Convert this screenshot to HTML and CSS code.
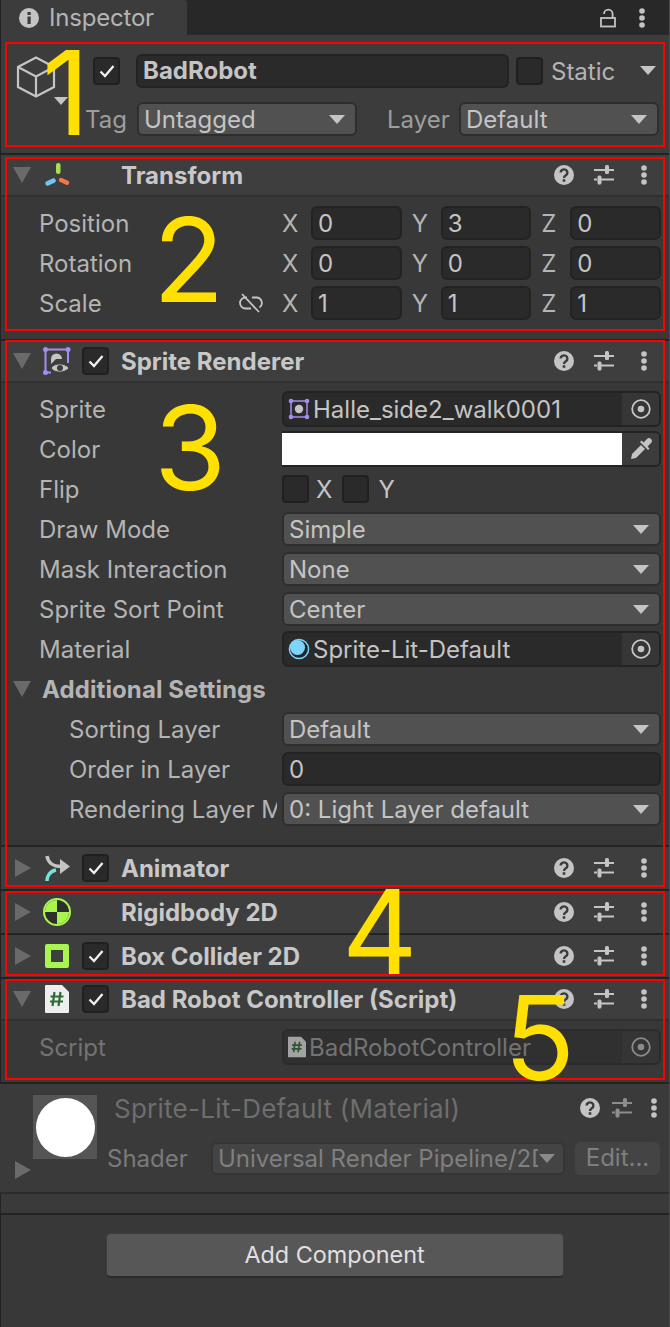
FILE: index.html
```html
<!DOCTYPE html>
<html lang="en">
<head>
    <meta charset="UTF-8">
    <meta name="viewport" content="width=device-width, initial-scale=1.0">
    <title>Inspector</title>
    <link rel="stylesheet" href="styles.css">
</head>
<body>
<svg class="defs" width="0" height="0">
    <symbol id="i-help" viewBox="0 0 20 20">
        <circle cx="10" cy="10" r="10" fill="#c4c4c4"/>
        <path d="M6.600 7.600a3.400 3.200 0 1 1 5.200 2.700c-1.200.8-1.800 1.200-1.800 2.600" fill="none" stroke="#3c3c3c" stroke-width="2.400"/>
        <rect x="8.700" y="14.200" width="2.600" height="2.600" fill="#3c3c3c"/>
    </symbol>
    <symbol id="i-sliders" viewBox="0 0 20 20">
        <path d="M0 5h11M15 5h5M0 14.500h3M7 14.500h13" stroke="#c4c4c4" stroke-width="2" fill="none"/>
        <rect x="11" y="0" width="4" height="9" rx="1.500" fill="#c4c4c4"/>
        <rect x="3.500" y="10.500" width="4" height="9" rx="1.500" fill="#c4c4c4"/>
    </symbol>
    <symbol id="i-dots" viewBox="0 0 8 20">
        <circle cx="4" cy="3" r="2.800" fill="#c4c4c4"/>
        <circle cx="4" cy="10" r="2.800" fill="#c4c4c4"/>
        <circle cx="4" cy="17" r="2.800" fill="#c4c4c4"/>
    </symbol>
    <symbol id="i-check" viewBox="0 0 16 14">
        <path d="M1.500 7.500l4.500 4.500 8.500-10" fill="none" stroke="#f0f0f0" stroke-width="2.300"/>
    </symbol>
    <symbol id="i-target" viewBox="0 0 20 20">
        <circle cx="10" cy="10" r="8.800" fill="none" stroke="#c4c4c4" stroke-width="1.800"/>
        <circle cx="10" cy="10" r="3.300" fill="#c4c4c4"/>
    </symbol>
    <symbol id="i-sprite" viewBox="0 0 22 22">
        <rect x="3" y="3" width="16" height="16" fill="none" stroke="#a48df0" stroke-width="1.500"/>
        <circle cx="11" cy="11" r="4.200" fill="#c4c4c4"/>
        <circle cx="3" cy="3" r="2.300" fill="#a48df0"/>
        <circle cx="19" cy="3" r="2.300" fill="#a48df0"/>
        <circle cx="3" cy="19" r="2.300" fill="#a48df0"/>
        <circle cx="19" cy="19" r="2.300" fill="#a48df0"/>
    </symbol>
    <symbol id="i-script" viewBox="0 0 24 28">
        <path d="M1 0h16l7 7v20a1 1 0 0 1-1 1H1a1 1 0 0 1-1-1V1a1 1 0 0 1 1-1z" fill="#eeeeee"/>
        <path d="M9.500 7l-2 14M15.500 7l-2 14M5.500 11.500h13M5 16.500h13" stroke="#2d6b33" stroke-width="2.200" fill="none"/>
    </symbol>
</svg>

<div class="inspector">
    <div class="tabbar">
        <div class="tab">
            <svg class="tab-icon" width="20" height="20" viewBox="0 0 20 20">
                <circle cx="10" cy="10" r="10" fill="#c4c4c4"/>
                <rect x="8.500" y="8.500" width="3.200" height="7.500" fill="#3c3c3c"/>
                <rect x="8.500" y="4" width="3.200" height="3" fill="#3c3c3c"/>
            </svg>
            <span class="tab-title">Inspector</span>
        </div>
        <div class="tab-tools">
            <svg width="16" height="20" viewBox="0 0 16 20">
                <rect x="1" y="10" width="14" height="8.500" fill="none" stroke="#c4c4c4" stroke-width="1.800"/>
                <path d="M4 6a4.200 4.200 0 0 1 8.600 0v4" fill="none" stroke="#c4c4c4" stroke-width="1.800"/>
            </svg>
            <svg class="dots"><use href="#i-dots"/></svg>
        </div>
    </div>

    <!-- game object header -->
    <section class="object-head">
        <div class="object-icon">
            <svg width="40" height="42" viewBox="0 0 40 42">
                <path d="M20 1.500L38 11v20L20 40.500 2 31V11zM2 11l18 9.500L38 11M20 20.500v20" fill="none" stroke="#c4c4c4" stroke-width="2.200"/>
            </svg>
            <span class="caret caret-small"></span>
        </div>
        <div class="object-fields">
            <div class="object-row">
                <span class="check"><svg class="tick"><use href="#i-check"/></svg></span>
                <div class="field name-field">BadRobot</div>
                <span class="check"></span>
                <span class="static-label">Static</span>
                <span class="caret static-caret"></span>
            </div>
            <div class="object-row tag-row">
                <span class="tag-label">Tag</span>
                <div class="popup tag-popup">Untagged<span class="caret"></span></div>
                <span class="layer-label">Layer</span>
                <div class="popup layer-popup">Default<span class="caret"></span></div>
            </div>
        </div>
    </section>

    <!-- transform -->
    <section class="component">
        <header class="comp-head">
            <span class="fold fold-open"></span>
            <svg class="comp-icon" width="26" height="26" viewBox="0 0 26 26">
                <rect x="11" y="1" width="4.500" height="11" rx="2.200" fill="#a6e34a"/>
                <rect x="15" y="15" width="11" height="4.500" rx="2.200" transform="rotate(25 15 15)" fill="#f0774a"/>
                <rect x="0" y="18" width="11" height="4.500" rx="2.200" transform="rotate(-25 5 20)" fill="#6fc6f5"/>
            </svg>
            <span class="check check-none"></span>
            <span class="comp-title">Transform</span>
            <div class="comp-tools">
                <svg class="help"><use href="#i-help"/></svg>
                <svg class="sliders"><use href="#i-sliders"/></svg>
                <svg class="dots"><use href="#i-dots"/></svg>
            </div>
        </header>
        <div class="comp-body transform-body">
            <div class="row">
                <span class="label">Position</span>
                <div class="xyz">
                    <div class="axis"><span>X</span><div class="field">0</div></div>
                    <div class="axis"><span>Y</span><div class="field">3</div></div>
                    <div class="axis"><span>Z</span><div class="field">0</div></div>
                </div>
            </div>
            <div class="row">
                <span class="label">Rotation</span>
                <div class="xyz">
                    <div class="axis"><span>X</span><div class="field">0</div></div>
                    <div class="axis"><span>Y</span><div class="field">0</div></div>
                    <div class="axis"><span>Z</span><div class="field">0</div></div>
                </div>
            </div>
            <div class="row">
                <span class="label">Scale</span>
                <svg class="link" width="24" height="20" viewBox="0 0 24 20">
                    <path d="M8 4.500H6.500a5.500 5.500 0 0 0 0 11H12M13 4.500h4.500a5.500 5.500 0 0 1 3 10M3 1l17 18" fill="none" stroke="#c4c4c4" stroke-width="1.800"/>
                </svg>
                <div class="xyz">
                    <div class="axis"><span>X</span><div class="field">1</div></div>
                    <div class="axis"><span>Y</span><div class="field">1</div></div>
                    <div class="axis"><span>Z</span><div class="field">1</div></div>
                </div>
            </div>
        </div>
    </section>

    <!-- sprite renderer -->
    <section class="component">
        <header class="comp-head">
            <span class="fold fold-open"></span>
            <svg class="comp-icon icon-wide" width="28" height="28" viewBox="0 0 28 28">
                <path d="M2.500 25.500V2.500H25V16" fill="none" stroke="#a48df0" stroke-width="2"/>
                <path d="M2.500 25.500H8" fill="none" stroke="#a48df0" stroke-width="2"/>
                <circle cx="2.500" cy="2.500" r="2.500" fill="#a48df0"/>
                <circle cx="25" cy="2.500" r="2.500" fill="#a48df0"/>
                <circle cx="2.500" cy="25.500" r="2.500" fill="#a48df0"/>
                <path d="M8 17v-5a5.500 5.500 0 0 1 11 0H13z" fill="#c4c4c4"/>
                <path d="M8 21c3-5.500 14-5.500 18 0-4 5.500-15 5.500-18 0z" fill="#c4c4c4" stroke="#3e3e3e" stroke-width="1"/>
                <circle cx="17" cy="21" r="3" fill="#3e3e3e"/>
            </svg>
            <span class="check"><svg class="tick"><use href="#i-check"/></svg></span>
            <span class="comp-title">Sprite Renderer</span>
            <div class="comp-tools">
                <svg class="help"><use href="#i-help"/></svg>
                <svg class="sliders"><use href="#i-sliders"/></svg>
                <svg class="dots"><use href="#i-dots"/></svg>
            </div>
        </header>
        <div class="comp-body sprite-body">
            <div class="row">
                <span class="label">Sprite</span>
                <div class="field object-field">
                    <svg class="obj-icon" width="22" height="22"><use href="#i-sprite"/></svg>
                    <span class="obj-name">Halle_side2_walk0001</span>
                    <span class="picker"><svg class="target"><use href="#i-target"/></svg></span>
                </div>
            </div>
            <div class="row">
                <span class="label">Color</span>
                <div class="color-field">
                    <span class="swatch"></span>
                    <span class="picker">
                        <svg width="22" height="22" viewBox="0 0 22 22">
                            <path d="M1 21l1-5L11 7l4 4-9 9z" fill="#c4c4c4"/>
                            <path d="M10 4l8 8 1.500-1.500-2-2L21 5a2.800 2.800 0 0 0-4-4l-3.500 3.500-2-2z" fill="#c4c4c4"/>
                        </svg>
                    </span>
                </div>
            </div>
            <div class="row">
                <span class="label">Flip</span>
                <div class="flip">
                    <span class="check"></span><span class="flip-x">X</span>
                    <span class="check"></span><span class="flip-y">Y</span>
                </div>
            </div>
            <div class="row">
                <span class="label">Draw Mode</span>
                <div class="popup value">Simple<span class="caret"></span></div>
            </div>
            <div class="row">
                <span class="label">Mask Interaction</span>
                <div class="popup value">None<span class="caret"></span></div>
            </div>
            <div class="row">
                <span class="label">Sprite Sort Point</span>
                <div class="popup value">Center<span class="caret"></span></div>
            </div>
            <div class="row">
                <span class="label">Material</span>
                <div class="field object-field">
                    <svg class="obj-icon" width="22" height="22" viewBox="0 0 22 22">
                        <circle cx="11" cy="11" r="9.600" fill="#20262a" stroke="#7fd4fb" stroke-width="1.500"/>
                        <circle cx="9.500" cy="9.500" r="7.500" fill="#7fd4fb"/>
                    </svg>
                    <span class="obj-name">Sprite-Lit-Default</span>
                    <span class="picker"><svg class="target"><use href="#i-target"/></svg></span>
                </div>
            </div>
            <div class="row sub-head">
                <span class="fold fold-open"></span>
                <span class="sub-title">Additional Settings</span>
            </div>
            <div class="row nested">
                <span class="label">Sorting Layer</span>
                <div class="popup value">Default<span class="caret"></span></div>
            </div>
            <div class="row nested">
                <span class="label">Order in Layer</span>
                <div class="field value">0</div>
            </div>
            <div class="row nested">
                <span class="label">Rendering Layer Mask</span>
                <div class="popup value">0: Light Layer default<span class="caret"></span></div>
            </div>
        </div>
    </section>

    <!-- animator -->
    <section class="component">
        <header class="comp-head comp-tall">
            <span class="fold fold-shut"></span>
            <svg class="comp-icon" width="26" height="26" viewBox="0 0 26 26">
                <path d="M2 1c1 7 7 10.500 14 10.500" fill="none" stroke="#c4c4c4" stroke-width="3.500"/>
                <path d="M15 4l10 7.500-10 7.500z" fill="#c4c4c4"/>
                <path d="M2 26c0-5 3-10 9-11" fill="none" stroke="#6ee5d8" stroke-width="3.500"/>
            </svg>
            <span class="check"><svg class="tick"><use href="#i-check"/></svg></span>
            <span class="comp-title">Animator</span>
            <div class="comp-tools">
                <svg class="help"><use href="#i-help"/></svg>
                <svg class="sliders"><use href="#i-sliders"/></svg>
                <svg class="dots"><use href="#i-dots"/></svg>
            </div>
        </header>
    </section>

    <!-- rigidbody -->
    <section class="component">
        <header class="comp-head comp-tall">
            <span class="fold fold-shut"></span>
            <svg class="comp-icon icon-wide" width="28" height="28" viewBox="0 0 28 28">
                <circle cx="14" cy="14" r="13" fill="#2e2e2e" stroke="#a9f550" stroke-width="2"/>
                <path d="M14 2a12 12 0 0 0-12 12h12zM14 14h12a12 12 0 0 1-12 12z" fill="#a9f550"/>
            </svg>
            <span class="check check-none"></span>
            <span class="comp-title">Rigidbody 2D</span>
            <div class="comp-tools">
                <svg class="help"><use href="#i-help"/></svg>
                <svg class="sliders"><use href="#i-sliders"/></svg>
                <svg class="dots"><use href="#i-dots"/></svg>
            </div>
        </header>
    </section>

    <!-- box collider -->
    <section class="component">
        <header class="comp-head comp-tall">
            <span class="fold fold-shut"></span>
            <span class="box-icon"></span>
            <span class="check"><svg class="tick"><use href="#i-check"/></svg></span>
            <span class="comp-title">Box Collider 2D</span>
            <div class="comp-tools">
                <svg class="help"><use href="#i-help"/></svg>
                <svg class="sliders"><use href="#i-sliders"/></svg>
                <svg class="dots"><use href="#i-dots"/></svg>
            </div>
        </header>
    </section>

    <!-- script -->
    <section class="component">
        <header class="comp-head">
            <span class="fold fold-open"></span>
            <svg class="comp-icon script-icon" width="24" height="28"><use href="#i-script"/></svg>
            <span class="check"><svg class="tick"><use href="#i-check"/></svg></span>
            <span class="comp-title">Bad Robot Controller (Script)</span>
            <div class="comp-tools">
                <svg class="help"><use href="#i-help"/></svg>
                <svg class="sliders"><use href="#i-sliders"/></svg>
                <svg class="dots"><use href="#i-dots"/></svg>
            </div>
        </header>
        <div class="comp-body script-body">
            <div class="row dim">
                <span class="label">Script</span>
                <div class="field object-field">
                    <svg class="obj-icon" width="18" height="22" viewBox="0 0 24 28"><use href="#i-script"/></svg>
                    <span class="obj-name">BadRobotController</span>
                    <span class="picker"><svg class="target"><use href="#i-target"/></svg></span>
                </div>
            </div>
        </div>
    </section>

    <!-- material -->
    <section class="material">
        <span class="fold fold-shut mat-fold"></span>
        <div class="mat-preview"><span class="mat-ball"></span></div>
        <div class="mat-info">
            <div class="mat-top">
                <span class="mat-title">Sprite-Lit-Default (Material)</span>
                <div class="comp-tools mat-tools">
                    <svg class="help"><use href="#i-help"/></svg>
                    <svg class="sliders dim-icon"><use href="#i-sliders"/></svg>
                    <svg class="dots"><use href="#i-dots"/></svg>
                </div>
            </div>
            <div class="mat-bottom">
                <span class="shader-label">Shader</span>
                <div class="popup shader-popup"><span class="shader-name">Universal Render Pipeline/2D/Sprite-Lit-Default</span><span class="caret"></span></div>
                <div class="edit-btn">Edit...</div>
            </div>
        </div>
    </section>
    <div class="spacer"></div>
    <div class="footer">
        <div class="add-btn">Add Component</div>
    </div>

    <!-- annotations drawn over the screenshot -->
    <div class="mark mark-1"></div>
    <div class="mark mark-2"></div>
    <div class="mark mark-3"></div>
    <div class="mark mark-4"></div>
    <div class="mark mark-5"></div>
    <span class="num num-1">1</span>
    <span class="num num-2">2</span>
    <span class="num num-3">3</span>
    <span class="num num-4">4</span>
    <span class="num num-5">5</span>
</div>
</body>
</html>
```
FILE: styles.css
```css
/* Global Styles */
* {
    box-sizing: border-box;
}
body {
    margin: 0;
    background-color: #383838;
    color: #c4c4c4;
    font-family: Inter, "Noto Sans", sans-serif;
    font-size: 24px;
}
.defs {
    position: absolute;
}
.inspector {
    position: relative;
    width: 670px;
    height: 1327px;
    overflow: hidden;
    border-right: 1px solid #4a4a4a;
    background-color: #383838;
}
.inspector::before {
    content: "";
    position: absolute;
    left: 0;
    top: 0;
    bottom: 0;
    width: 1px;
    background-color: #232323;
}

/* Tab bar */
.tabbar {
    display: flex;
    justify-content: space-between;
    height: 35px;
    background-color: #282828;
}
.tab {
    display: flex;
    align-items: center;
    width: 187px;
    padding-left: 19px;
    background-color: #3c3c3c;
    border-top-right-radius: 3px;
}
.tab-title {
    margin-left: 10px;
    color: #b4b4b4;
    letter-spacing: -0.2px;
}
.tab-tools {
    display: flex;
    align-items: center;
    gap: 22px;
    padding-right: 23px;
}

/* Icon sizes */
svg.dots {
    width: 8px;
    height: 20px;
}
svg.help,
svg.sliders {
    width: 20px;
    height: 20px;
}
svg.tick {
    width: 16px;
    height: 14px;
}
svg.target {
    width: 20px;
    height: 20px;
}

/* Carets */
.caret {
    width: 0;
    height: 0;
    margin-left: auto;
    border-left: 8px solid transparent;
    border-right: 8px solid transparent;
    border-top: 9px solid #c4c4c4;
}
.caret-small {
    position: absolute;
    left: 38px;
    top: 44px;
    border-left-width: 7px;
    border-right-width: 7px;
    border-top-width: 8px;
}
.fold {
    flex: none;
    width: 0;
    height: 0;
}
.fold-open {
    margin: 0 14px 0 13px;
    border-left: 9px solid transparent;
    border-right: 9px solid transparent;
    border-top: 16px solid #6a6a6a;
}
.fold-shut {
    margin: 0 14px 0 15px;
    border-top: 9px solid transparent;
    border-bottom: 9px solid transparent;
    border-left: 16px solid #6a6a6a;
}

/* Game object header */
.object-head {
    display: flex;
    height: 120px;
    padding: 18px 0 0 16px;
    background-color: #3c3c3c;
    border-bottom: 2px solid #232323;
}
.object-icon {
    position: relative;
    width: 69px;
    padding-top: 3px;
}
.object-fields {
    display: flex;
    flex-direction: column;
    gap: 14px;
}
.object-row {
    display: flex;
    align-items: center;
    height: 35px;
    padding-left: 8px;
}
.tag-row {
    height: 34px;
    padding-left: 0;
}
.name-field {
    width: 373px;
    height: 35px;
    margin: 0 7px 0 16px;
    padding-top: 4px;
    padding-left: 5px;
    font-weight: 700;
}
.static-label {
    margin-left: 8px;
    padding-top: 2px;
    color: #b4b4b4;
}
.static-caret {
    margin-left: 25px;
}
.tag-label {
    width: 52px;
    color: #9e9e9e;
}
.tag-popup {
    width: 220px;
}
.layer-label {
    width: 72px;
    margin-left: 30px;
    color: #9e9e9e;
}
.layer-popup {
    width: 200px;
}

/* Shared controls */
.check {
    flex: none;
    display: flex;
    align-items: center;
    justify-content: center;
    width: 27px;
    height: 28px;
    background-color: #2a2a2a;
    border: 2px solid #202020;
    border-radius: 4px;
}
.check-none {
    visibility: hidden;
}
.field,
.popup {
    display: flex;
    align-items: center;
    height: 34px;
    padding: 0 5px;
    border: 2px solid #232323;
    border-radius: 6px;
    background-color: #2a2a2a;
    white-space: nowrap;
}
.popup {
    padding-right: 10px;
    background-color: #515151;
    border-color: #2e2e2e;
}

/* Components */
.component {
    border-bottom: 2px solid #232323;
}
.comp-head {
    display: flex;
    align-items: center;
    height: 40px;
    background-color: #3e3e3e;
}
.comp-tall {
    height: 42px;
}
.comp-icon {
    flex: none;
    margin-right: 11px;
}
.icon-wide {
    margin-left: -2px;
}
.script-icon {
    margin-right: 13px;
}
.box-icon {
    flex: none;
    width: 24px;
    height: 24px;
    margin-right: 13px;
    border: 6px solid #a9f550;
    border-radius: 2px;
    background-color: #3e3e3e;
}
.comp-title {
    margin-left: 12px;
    font-weight: 700;
    color: #c8c8c8;
}
.comp-tools {
    display: flex;
    align-items: center;
    margin-left: auto;
    padding-right: 21px;
    gap: 20px;
}
.comp-tools .dots {
    margin-left: 6px;
}
.comp-body {
    border-top: 2px solid #303030;
}
.transform-body {
    padding: 6px 0 16px;
}
.sprite-body {
    padding: 6px 0 16px;
}
.script-body {
    height: 63px;
    padding-top: 6px;
}
.row {
    display: flex;
    align-items: center;
    position: relative;
    height: 40px;
    padding: 0 8px 0 39px;
}
.row .label {
    flex: none;
    width: 243px;
    overflow: hidden;
    white-space: nowrap;
    color: #b4b4b4;
}
.nested {
    padding-left: 69px;
}
.nested .label {
    width: 208px;
    margin-right: 5px;
}
.value,
.object-field,
.color-field,
.xyz {
    flex: 1;
}
.xyz {
    display: grid;
    grid-template-columns: repeat(3, 1fr);
    gap: 10px;
}
.axis {
    display: flex;
    align-items: center;
}
.axis span {
    width: 29px;
    color: #b4b4b4;
}
.axis .field {
    flex: 1;
}
.link {
    position: absolute;
    left: 239px;
    top: 10px;
}
.object-field {
    height: 36px;
    padding: 0 0 0 4px;
    overflow: hidden;
}
.obj-icon {
    flex: none;
    margin-right: 3px;
}
.picker {
    flex: none;
    display: flex;
    align-items: center;
    justify-content: center;
    width: 37px;
    height: 100%;
    margin-left: auto;
    background-color: #363636;
}
.color-field {
    display: flex;
    height: 36px;
    border: 2px solid #232323;
    border-left: 0;
    border-radius: 0 6px 6px 0;
    overflow: hidden;
}
.swatch {
    flex: 1;
    background-color: #ffffff;
}
.color-field .picker {
    background-color: #3c3c3c;
}
.flip {
    display: flex;
    align-items: center;
}
.flip-x {
    margin: 0 10px 0 7px;
}
.flip-y {
    margin-left: 9px;
}
.sub-head {
    padding-left: 0;
}
.sub-head .fold {
    margin-right: 11px;
}
.sub-title {
    font-weight: 700;
    letter-spacing: 0.1px;
    color: #b4b4b4;
}

/* Disabled script row */
.dim .label,
.dim .obj-name {
    color: #737373;
}
.dim .object-field {
    background-color: #303030;
    border-color: #2c2c2c;
}
.dim svg {
    opacity: 0.6;
}
.dim .picker {
    background-color: #353535;
}

/* Material */
.material {
    display: flex;
    position: relative;
    height: 110px;
    padding: 11px 0 0 33px;
    border-bottom: 2px solid #2c2c2c;
    background-color: #3a3a3a;
}
.mat-fold {
    position: absolute;
    left: 0;
    top: 77px;
}
.mat-preview {
    flex: none;
    display: flex;
    align-items: center;
    justify-content: center;
    width: 64px;
    height: 64px;
    background-color: #555555;
}
.mat-ball {
    width: 59px;
    height: 59px;
    border-radius: 50%;
    background-color: #ffffff;
}
.mat-info {
    flex: 1;
}
.mat-top {
    display: flex;
    align-items: center;
    height: 30px;
    margin-top: -2px;
    padding-left: 17px;
}
.mat-title {
    font-size: 26px;
    letter-spacing: 0.25px;
    color: #6e6e6e;
}
.mat-tools {
    padding-right: 11px;
    gap: 12px;
}
.mat-tools .dots {
    margin-left: 6px;
}
.mat-tools .dim-icon {
    opacity: 0.6;
}
.mat-bottom {
    display: flex;
    align-items: center;
    margin-top: 19px;
    padding-left: 10px;
}
.shader-label {
    width: 104px;
    color: #7a7a7a;
}
.shader-popup {
    width: 354px;
    height: 33px;
    padding-right: 8px;
    background-color: #444444;
    border-color: #353535;
    overflow: hidden;
}
.shader-name {
    width: 320px;
    overflow: hidden;
    color: #7f7f7f;
}
.shader-popup .caret {
    border-top-color: #8a8a8a;
    flex: none;
}
.edit-btn {
    width: 85px;
    height: 33px;
    margin-left: 10px;
    line-height: 32px;
    text-align: center;
    border-radius: 6px;
    background-color: #444444;
    color: #7f7f7f;
}
.spacer {
    height: 21px;
    border-bottom: 2px solid #232323;
    background-color: #3a3a3a;
}
.footer {
    display: flex;
    justify-content: center;
    padding-top: 18px;
}
.add-btn {
    width: 458px;
    height: 45px;
    line-height: 42px;
    text-align: center;
    font-size: 23.4px;
    background-color: #575757;
    border: 1px solid #3c3c3c;
    border-bottom: 2px solid #2b2b2b;
    border-radius: 5px;
    color: #e0e0e0;
}

/* Annotations */
.mark {
    position: absolute;
    left: 5px;
    width: 660px;
    border: 2px solid #ff0000;
}
.mark-1 {
    top: 42px;
    height: 105px;
}
.mark-2 {
    top: 157px;
    height: 174px;
}
.mark-3 {
    top: 340px;
    height: 547px;
}
.mark-4 {
    top: 891px;
    height: 85px;
}
.mark-5 {
    top: 979px;
    height: 101px;
}
.num {
    position: absolute;
    font-family: Inter, sans-serif;
    font-size: 117px;
    line-height: 118px;
    color: #ffe000;
}
.num-1 {
    left: 42px;
    top: 34px;
}
.num-2 {
    left: 153px;
    top: 201px;
}
.num-3 {
    left: 154px;
    top: 389px;
}
.num-4 {
    left: 342px;
    top: 873px;
}
.num-5 {
    left: 504px;
    top: 979px;
}
```
